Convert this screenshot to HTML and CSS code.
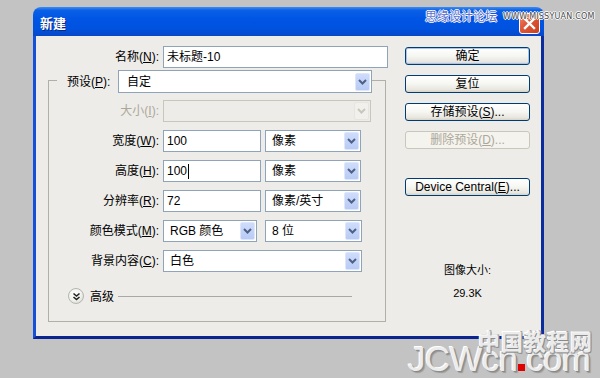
FILE: index.html
```html
<!DOCTYPE html>
<html lang="zh-CN">
<head>
<meta charset="utf-8">
<title>新建</title>
<link rel="stylesheet" href="styles.css">
</head>
<body>
<div class="win">
  <div class="titlebar">
    <span class="title">新建</span>
    <span class="close"><svg width="13" height="13" viewBox="0 0 13 13"><path d="M2 2L11 11M11 2L2 11" stroke="#fff" stroke-width="2.4" stroke-linecap="square"/></svg></span>
  </div>
  <div class="body">
    <div class="left">
      <div class="row name-row">
        <span class="lbl lbl-name">名称(<u>N</u>):</span>
        <div class="field w225">未标题-10</div>
      </div>
      <div class="group">
        <div class="legend">
          <span class="lbl lbl-preset">预设(<u>P</u>):</span>
          <div class="select w254 pad8">自定<span class="arrow"><svg width="9" height="6" viewBox="0 0 9 6"><path d="M1 1L4.5 4.5L8 1" fill="none" stroke="#4d6185" stroke-width="2"/></svg></span></div>
        </div>
        <div class="row r-first">
          <span class="lbl dis">大小(<u>I</u>):</span>
          <div class="select disabled w208"><span class="arrow"><svg width="9" height="6" viewBox="0 0 9 6"><path d="M1 1L4.5 4.5L8 1" fill="none" stroke="#c9c7ba" stroke-width="2"/></svg></span></div>
        </div>
        <div class="row">
          <span class="lbl">宽度(<u>W</u>):</span>
          <div class="field w98">100</div>
          <div class="select w96">像素<span class="arrow"><svg width="9" height="6" viewBox="0 0 9 6"><path d="M1 1L4.5 4.5L8 1" fill="none" stroke="#4d6185" stroke-width="2"/></svg></span></div>
        </div>
        <div class="row">
          <span class="lbl">高度(<u>H</u>):</span>
          <div class="field w98">100<span class="caret"></span></div>
          <div class="select w96">像素<span class="arrow"><svg width="9" height="6" viewBox="0 0 9 6"><path d="M1 1L4.5 4.5L8 1" fill="none" stroke="#4d6185" stroke-width="2"/></svg></span></div>
        </div>
        <div class="row">
          <span class="lbl">分辨率(<u>R</u>):</span>
          <div class="field w98">72</div>
          <div class="select w96">像素/英寸<span class="arrow"><svg width="9" height="6" viewBox="0 0 9 6"><path d="M1 1L4.5 4.5L8 1" fill="none" stroke="#4d6185" stroke-width="2"/></svg></span></div>
        </div>
        <div class="row">
          <span class="lbl">颜色模式(<u>M</u>):</span>
          <div class="select w94">RGB 颜色<span class="arrow"><svg width="9" height="6" viewBox="0 0 9 6"><path d="M1 1L4.5 4.5L8 1" fill="none" stroke="#4d6185" stroke-width="2"/></svg></span></div>
          <div class="select w97 gap8">8 位<span class="arrow"><svg width="9" height="6" viewBox="0 0 9 6"><path d="M1 1L4.5 4.5L8 1" fill="none" stroke="#4d6185" stroke-width="2"/></svg></span></div>
        </div>
        <div class="row">
          <span class="lbl">背景内容(<u>C</u>):</span>
          <div class="select w199">白色<span class="arrow"><svg width="9" height="6" viewBox="0 0 9 6"><path d="M1 1L4.5 4.5L8 1" fill="none" stroke="#4d6185" stroke-width="2"/></svg></span></div>
        </div>
        <div class="adv">
          <span class="adv-btn"><svg width="9" height="9" viewBox="0 0 9 9"><path d="M1.5 1.5L4.5 4L7.5 1.5M1.5 5L4.5 7.5L7.5 5" fill="none" stroke="#222" stroke-width="1.6"/></svg></span>
          <span class="adv-txt">高级</span>
          <span class="adv-line"></span>
        </div>
      </div>
    </div>
    <div class="right">
      <div class="btn default">确定</div>
      <div class="btn">复位</div>
      <div class="btn">存储预设(<u>S</u>)...</div>
      <div class="btn off">删除预设(<u>D</u>)...</div>
      <div class="btn dc">Device Central(<u>E</u>)...</div>
      <div class="info">图像大小:</div>
      <div class="info size">29.3K</div>
    </div>
  </div>
</div>
<div class="wm-top"><span class="wm-cn">思缘设计论坛</span><span class="wm-url">WWW.MISSYUAN.COM</span></div>
<div class="wm-bottom">
  <div class="wm-zh">中国教程网</div>
  <div class="wm-en">JCWcn<span class="dot"></span>com</div>
</div>
</body>
</html>
```
FILE: styles.css
```css
html, body {
  margin: 0;
  padding: 0;
}
body {
  width: 600px;
  height: 378px;
  overflow: hidden;
  background: #c3c3c3;
  font-family: "Liberation Sans", "Noto Sans CJK SC", sans-serif;
  font-size: 12px;
  color: #000;
  position: relative;
}
u { text-decoration: underline; text-underline-offset: 1px; }

.win {
  margin-left: 33px;
  padding-top: 7px;
  width: 511px;
}
.titlebar {
  height: 29px;
  box-sizing: border-box;
  border-radius: 8px 8px 0 0;
  background: linear-gradient(#3b8cf5 0%, #0a5fe6 12%, #0055e5 40%, #0052df 75%, #0747c8 100%);
  display: flex;
  align-items: flex-start;
  padding: 6px 4px 0 7px;
}
.title {
  color: #fff;
  font-weight: bold;
  font-size: 13px;
  line-height: 20px;
  font-family: "Noto Sans CJK SC", sans-serif;
  text-shadow: 1px 1px 0 #0a2a80;
}
.close {
  margin-left: auto;
  width: 21px;
  height: 21px;
  box-sizing: border-box;
  border: 1px solid #fff;
  border-radius: 3px;
  background: linear-gradient(135deg, #f08a6a 0%, #e0593a 40%, #c8401e 100%);
  display: flex;
  align-items: center;
  justify-content: center;
}

.body {
  height: 303px;
  box-sizing: border-box;
  background: #edece9;
  border-left: 3px solid #1550d8;
  border-right: 3px solid #0b2c9c;
  border-bottom: 3px solid #0a2490;
  display: flex;
  padding-left: 12px;
}
.left {
  width: 340px;
}
.row {
  display: flex;
  align-items: center;
  height: 22px;
  margin-top: 8px;
}
.name-row {
  margin-top: 10px;
}
.lbl {
  width: 110px;
  text-align: right;
  margin-right: 4px;
  line-height: 16px;
  white-space: nowrap;
}
.lbl-name { width: 111px; }
.dis { color: #aca899; }

.field, .select {
  height: 22px;
  box-sizing: border-box;
  border: 1px solid #8fa4b8;
  background: #fff;
  display: flex;
  align-items: center;
  padding-left: 3px;
  line-height: 16px;
  white-space: nowrap;
}
.select { padding-left: 6px; }
.pad8 { padding-left: 8px; }
.caret {
  display: inline-block;
  width: 1px;
  height: 15px;
  background: #000;
  margin-left: 1px;
}
.arrow {
  margin-left: auto;
  margin-right: 1px;
  width: 15px;
  height: 18px;
  box-sizing: border-box;
  border: 1px solid #dde6fb;
  border-radius: 2px;
  background: linear-gradient(#cfdcfb, #b8cbf6);
  display: flex;
  align-items: center;
  justify-content: center;
}
.disabled {
  background: #edece9;
  border-color: #c9c7ba;
}
.disabled .arrow {
  background: #f1f0ec;
  border-color: #e6e5de;
}
.w225 { width: 225px; }
.w254 { width: 254px; height: 23px; }
.w208 { width: 208px; }
.w98 { width: 98px; }
.w96 { width: 96px; margin-left: 4px; }
.w94 { width: 94px; }
.w97 { width: 97px; }
.gap8 { margin-left: 8px; }
.w199 { width: 199px; }

.group {
  margin-top: 12px;
  width: 338px;
  height: 242px;
  box-sizing: border-box;
  border: 1px solid #b0b0a8;
}
.legend {
  margin-top: -11px;
  margin-left: 8px;
  padding-left: 10px;
  width: max-content;
  background: #edece9;
  display: flex;
  align-items: center;
  height: 23px;
}
.lbl-preset {
  width: 47px;
  text-align: left;
}
.r-first { margin-top: 7px; }
.adv {
  display: flex;
  align-items: center;
  height: 16px;
  margin-top: 16px;
  padding-left: 19px;
}
.adv-btn {
  width: 16px;
  height: 16px;
  box-sizing: border-box;
  border: 1px solid #b4b4b0;
  border-radius: 50%;
  background: radial-gradient(circle at 40% 35%, #ffffff 0%, #f2f2ee 50%, #d4d4cc 100%);
  display: flex;
  align-items: center;
  justify-content: center;
}
.adv-txt {
  margin-left: 6px;
  width: 24px;
  line-height: 16px;
  font-family: "Noto Sans CJK SC", sans-serif;
}
.adv-line {
  margin-left: 4px;
  width: 234px;
  height: 1px;
  background: #a8a8a4;
}

.right {
  margin-left: 17px;
  width: 125px;
  padding-top: 11px;
  display: flex;
  flex-direction: column;
}
.btn {
  height: 18px;
  box-sizing: border-box;
  border: 1px solid #003c74;
  border-radius: 3px;
  background: linear-gradient(#ffffff 0%, #f6f6f2 50%, #e8e6df 85%, #d6d2c6 100%);
  display: flex;
  align-items: center;
  justify-content: center;
  line-height: 16px;
  margin-bottom: 10px;
  white-space: nowrap;
}
.default {
  box-shadow: inset 0 0 0 1px #a9c3ee;
}
.off {
  border-color: #c9c7ba;
  color: #aca899;
  background: #f4f3ee;
}
.dc {
  margin-top: 19px;
}
.info {
  text-align: center;
  line-height: 14px;
  margin-top: 57px;
  font-size: 11px;
}
.info.size {
  margin-top: 9px;
}

.wm-top {
  position: absolute;
  z-index: 2;
  left: 425px;
  top: 8px;
  display: flex;
  align-items: center;
  white-space: nowrap;
}
.wm-cn {
  font-family: "Noto Sans CJK SC", sans-serif;
  font-size: 12px;
  line-height: 16px;
  color: #5a6fd0;
  text-shadow: 1px 0 0 #fff, -1px 0 0 #fff, 0 1px 0 #fff, 0 -1px 0 #fff;
}
.wm-url {
  margin-left: 6px;
  font-family: "DejaVu Sans", sans-serif;
  font-size: 8px;
  letter-spacing: 0.2px;
  color: #4a4a4a;
  text-shadow: 1px 0 0 #fff, -1px 0 0 #fff, 0 1px 0 #fff, 0 -1px 0 #fff;
}
.wm-bottom {
  position: absolute;
  z-index: 2;
  left: 408px;
  top: 332px;
  white-space: nowrap;
}
.wm-zh {
  position: relative;
  z-index: 1;
  margin-left: 70px;
  height: 16px;
  font-family: "Noto Sans CJK SC", sans-serif;
  font-weight: bold;
  font-size: 22px;
  line-height: 16px;
  letter-spacing: 1px;
  color: #ebebeb;
  text-shadow: 1px 1px 0 #8a8a8a, -1px -1px 0 #ffffff, 1px -1px 0 #a0a0a0, -1px 1px 0 #a0a0a0;
}
.wm-en {
  height: 14px;
  margin-top: 4px;
  font-family: "Liberation Sans", sans-serif;
  font-size: 35px;
  line-height: 14px;
  color: #ececec;
  letter-spacing: -0.7px;
  text-shadow: 1px 1px 0 #8a8a8a, 2px 2px 1px #9a9a9a, -1px -1px 0 #ffffff;
}
.dot {
  display: inline-block;
  width: 7px;
  height: 7px;
  background: #e00000;
  margin: 0 1px 0 1px;
}
```
